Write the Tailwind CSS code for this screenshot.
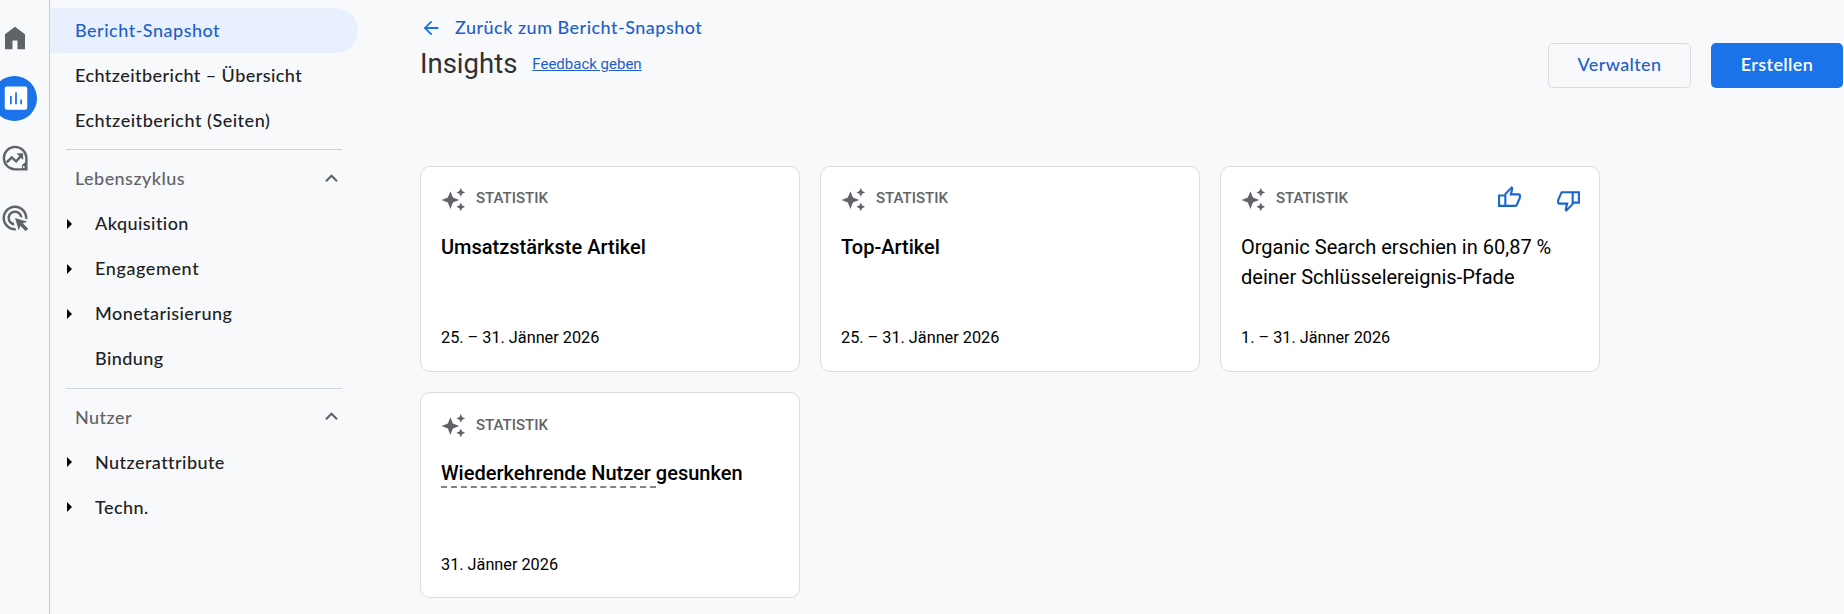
<!DOCTYPE html>
<html lang="de">
<head>
  <meta charset="UTF-8" />
  <meta name="viewport" content="width=device-width, initial-scale=1" />
  <title>Insights</title>
  <script src="https://cdn.jsdelivr.net/npm/@tailwindcss/browser@4"></script>
</head>
<body class="bg-[#f8f9fa] text-[#202124] font-[Roboto,sans-serif] h-screen overflow-hidden flex">
  <svg class="hidden">
    <symbol id="sparkle" viewBox="0 0 24 24">
      <path d="M9 4l2.400 6.100L17.500 12.500l-6.100 2.400L9 21l-2.400-6.100L.5 12.500l6.100-2.400z" />
      <path d="M19 1l1.300 2.900L23.200 5.200l-2.900 1.300L19 9.400l-1.300-2.900-2.900-1.300 2.900-1.300zM19 14.800l1.300 2.900 2.900 1.300-2.900 1.300L19 23.200l-1.300-2.900-2.900-1.300 2.900-1.300z" />
    </symbol>
    <symbol id="chevron" viewBox="0 0 24 24">
      <path d="M12 8l-6 6 1.410 1.410L12 10.830l4.590 4.580L18 14z" />
    </symbol>
  </svg>

  <!-- icon rail -->
  <nav class="w-[50px] shrink-0 border-r border-[#c8cbcf] pt-[15.500px] flex flex-col gap-[15px] text-[#5f6368]">
    <a class="-ml-[7.500px] size-[45px] flex items-center justify-center">
      <svg class="size-[30px]" viewBox="0 0 24 24" fill="currentColor"><path d="M4 21V9l8-6 8 6v12h-6v-7h-4v7z" /></svg>
    </a>
    <a class="-ml-[8px] size-[45px] rounded-full bg-[#1a73e8] text-white flex items-center justify-center">
      <svg class="size-[30px] translate-x-[1px]" viewBox="0 0 24 24" fill="currentColor"><path d="M19.500 2.700h-15a1.500 1.500 0 0 0-1.500 1.500v15.600c0 .8.700 1.500 1.500 1.500h15c.8 0 1.500-.7 1.500-1.500V4.200c0-.8-.7-1.500-1.500-1.500zM8.600 17H7.200v-6.600h1.400zm4.100 0h-1.400V7.300h1.400zm4.100 0h-1.400v-3.800h1.400z" /></svg>
    </a>
    <a class="-ml-[7.500px] size-[45px] flex items-center justify-center">
      <svg class="size-[30px]" viewBox="0 0 24 24" fill="none" stroke="currentColor" stroke-width="1.900">
        <path d="M21.100 12A9 9 0 1 0 12 21.100h9.100z" />
        <path d="M17.500 21v-3.200L21 14.500V21z" fill="currentColor" stroke="none" />
        <path d="M5.400 15.500l4-4 3.500 3.200 4.400-4.800" />
        <path d="M13.200 8.200h5.300v5.300z" fill="currentColor" stroke="none" />
        <circle cx="19" cy="19.200" r=".8" fill="#f8f9fa" stroke="none" />
      </svg>
    </a>
    <a class="-ml-[7.500px] size-[45px] flex items-center justify-center">
      <svg class="size-[30px]" viewBox="0 0 24 24" fill="currentColor"><path d="M11.710 17.990A5.993 5.993 0 0 1 6 12c0-3.310 2.690-6 6-6 3.220 0 5.840 2.530 5.990 5.710l-2.100-.63a3.999 3.999 0 1 0-4.810 4.810zM22 12c0 .3-.01.6-.04.9l-1.970-.59c.01-.1.01-.21.01-.31 0-4.420-3.580-8-8-8s-8 3.580-8 8 3.580 8 8 8c.1 0 .21 0 .31-.01l.59 1.970c-.3.03-.6.04-.9.040-5.520 0-10-4.480-10-10S6.480 2 12 2s10 4.480 10 10zm-3.770 4.260L22 15l-10-3 3 10 1.260-3.770 4.270 4.270 1.980-1.980z" /></svg>
    </a>
  </nav>

  <!-- report navigation -->
  <aside class="w-[308px] shrink-0 pt-2 font-[Lato,sans-serif] font-medium text-[18px] tracking-[0.440px] leading-[45px]">
    <a class="block h-[45px] pl-[25px] rounded-r-full bg-[#e8f0fe] text-[#1f5fc9] leading-[44px] tracking-[0.500px]">Bericht-Snapshot</a>
    <a class="block h-[45px] pl-[25px]">Echtzeitbericht – Übersicht</a>
    <a class="block h-[45px] pl-[25px] tracking-[0.520px]">Echtzeitbericht (Seiten)</a>
    <div class="ml-4 mr-4 mt-[6px] border-t border-[#d0d3d7]"></div>
    <div class="mt-[6px] h-[45px] pl-[25px] pr-[14px] flex items-center justify-between text-[#5f6368]">
      Lebenszyklus
      <svg class="size-[25px]" viewBox="0 0 24 24" fill="currentColor"><use href="#chevron" /></svg>
    </div>
    <a class="h-[45px] pl-[17px] flex items-center"><svg class="w-[5px] h-[10px] mr-[23px]" viewBox="0 0 5 10"><path d="M0 0l5 5-5 5z" /></svg>Akquisition</a>
    <a class="h-[45px] pl-[17px] flex items-center tracking-[0.600px]"><svg class="w-[5px] h-[10px] mr-[23px]" viewBox="0 0 5 10"><path d="M0 0l5 5-5 5z" /></svg>Engagement</a>
    <a class="h-[45px] pl-[17px] flex items-center"><svg class="w-[5px] h-[10px] mr-[23px]" viewBox="0 0 5 10"><path d="M0 0l5 5-5 5z" /></svg>Monetarisierung</a>
    <a class="h-[45px] pl-[45px] flex items-center">Bindung</a>
    <div class="ml-4 mr-4 mt-[7px] border-t border-[#d0d3d7]"></div>
    <div class="mt-[6px] h-[45px] pl-[25px] pr-[14px] flex items-center justify-between text-[#5f6368]">
      Nutzer
      <svg class="size-[25px] -mt-[2px]" viewBox="0 0 24 24" fill="currentColor"><use href="#chevron" /></svg>
    </div>
    <a class="h-[45px] pl-[17px] flex items-center"><svg class="w-[5px] h-[10px] mr-[23px] -mt-[2px]" viewBox="0 0 5 10"><path d="M0 0l5 5-5 5z" /></svg>Nutzerattribute</a>
    <a class="h-[45px] pl-[17px] flex items-center"><svg class="w-[5px] h-[10px] mr-[23px] -mt-[2px]" viewBox="0 0 5 10"><path d="M0 0l5 5-5 5z" /></svg>Techn.</a>
  </aside>

  <main class="flex-1 pl-[62px] pr-px">
    <header class="h-[166px] flex justify-between">
      <div class="pt-[15px]">
        <a class="h-[25px] flex items-center gap-[13px] text-[#1f5fc9] font-[Lato,sans-serif] font-medium text-[18px] tracking-[0.480px]">
          <svg class="size-[22px]" viewBox="0 0 24 24" fill="#1a73e8"><path d="M20 11H7.830l5.590-5.590L12 4l-8 8 8 8 1.410-1.410L7.830 13H20z" /></svg>
          Zurück zum Bericht-Snapshot
        </a>
        <div class="mt-px h-[45px] flex items-center">
          <h1 class="text-[27.500px] leading-[45px] text-[#303134]">Insights</h1>
          <a class="ml-[15px] mt-[2px] text-[15px] text-[#1f5fc9] underline">Feedback geben</a>
        </div>
      </div>
      <div class="pt-[43px] flex gap-5 font-[Lato,sans-serif] text-[18px] tracking-[0.380px]">
        <button class="w-[143px] h-[45px] pb-[2px] rounded-[5px] border border-[#dadce0] text-[#1f5fc9] font-medium">Verwalten</button>
        <button class="w-[132px] h-[45px] pb-[2px] rounded-[5px] bg-[#1a73e8] text-white font-semibold">Erstellen</button>
      </div>
    </header>

    <section class="grid grid-cols-[380px_380px_380px] gap-5 text-black">
      <article class="h-[206px] bg-white border border-[#dadce0] rounded-[10px] px-5 pt-[19px] flex flex-col">
        <div class="h-[25px] flex items-center gap-[10px] text-[15px] font-medium text-[#5f6368]">
          <svg class="size-[25px] translate-y-[1px]" fill="currentColor"><use href="#sparkle" /></svg>
          STATISTIK
        </div>
        <h2 class="mt-[21px] h-[60px] text-[20px] leading-[30px] font-medium">Umsatzstärkste Artikel</h2>
        <p class="mt-[33px] text-[16.250px] leading-[25px]">25. – 31. Jänner 2026</p>
      </article>
      <article class="h-[206px] bg-white border border-[#dadce0] rounded-[10px] px-5 pt-[19px] flex flex-col">
        <div class="h-[25px] flex items-center gap-[10px] text-[15px] font-medium text-[#5f6368]">
          <svg class="size-[25px] translate-y-[1px]" fill="currentColor"><use href="#sparkle" /></svg>
          STATISTIK
        </div>
        <h2 class="mt-[21px] h-[60px] text-[20px] leading-[30px] font-medium">Top-Artikel</h2>
        <p class="mt-[33px] text-[16.250px] leading-[25px]">25. – 31. Jänner 2026</p>
      </article>
      <article class="h-[206px] bg-white border border-[#dadce0] rounded-[10px] px-5 pt-[19px] flex flex-col">
        <div class="h-[25px] flex items-center gap-[10px] text-[15px] font-medium text-[#5f6368]">
          <svg class="size-[25px] translate-y-[1px]" fill="currentColor"><use href="#sparkle" /></svg>
          STATISTIK
          <div class="ml-auto -mr-[2px] flex gap-[34px] text-[#1a66d0]">
            <svg class="size-[25px]" viewBox="0 0 24 24" fill="currentColor"><path d="M21 8h-6.310l.95-4.570.03-.32c0-.41-.17-.79-.44-1.060L14.170 1 7.580 7.590C7.220 7.950 7 8.450 7 9H1v12h17c.83 0 1.540-.5 1.840-1.220l3.020-7.050c.09-.23.14-.47.14-.73v-2c0-1.100-.9-2-2-2zM7 19H3v-8h4zm14-7l-3 7H9V9l4.340-4.340L12 10h9z" /></svg>
            <svg class="size-[25px] mt-[3px]" viewBox="0 0 24 24" fill="currentColor"><path d="M15 3H6c-.83 0-1.540.5-1.840 1.220l-3.020 7.050c-.09.23-.14.47-.14.73v2c0 1.100.9 2 2 2h6.310l-.95 4.570-.03.32c0 .41.17.79.44 1.060L9.830 23l6.590-6.590c.36-.36.58-.86.58-1.410h6V3zm0 12l-4.340 4.340L12 14H3v-2l3-7h9zm2-10h4v8h-4z" /></svg>
          </div>
        </div>
        <h2 class="mt-[21px] h-[60px] text-[20px] leading-[30px]">Organic Search erschien in 60,87 %<br />deiner Schlüsselereignis-Pfade</h2>
        <p class="mt-[33px] text-[16.250px] leading-[25px]">1. – 31. Jänner 2026</p>
      </article>
      <article class="h-[206px] bg-white border border-[#dadce0] rounded-[10px] px-5 pt-[20px] flex flex-col">
        <div class="h-[25px] flex items-center gap-[10px] text-[15px] font-medium text-[#5f6368]">
          <svg class="size-[25px]" fill="currentColor"><use href="#sparkle" /></svg>
          STATISTIK
        </div>
        <h2 class="mt-[20px] h-[60px] text-[20px] leading-[30px] font-medium"><span class="border-b-2 border-dashed border-[#808387] pb-px whitespace-pre">Wiederkehrende Nutzer </span>gesunken</h2>
        <p class="mt-[34px] text-[16.250px] leading-[25px]">31. Jänner 2026</p>
      </article>
    </section>
  </main>
</body>
</html>
